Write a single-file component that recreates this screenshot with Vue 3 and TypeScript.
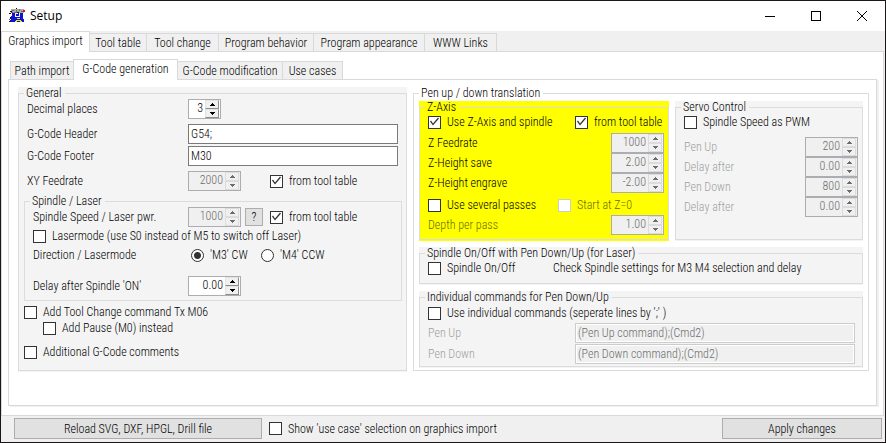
<script setup lang="ts">
import { h, reactive, ref } from 'vue'

interface SpinProps {
  id: string
  value: string
  disabled?: boolean
}

interface Field {
  id: string
  label: string
  value: string
}

interface Tab {
  label: string
  width: number
}

const arrow = (up: boolean) =>
  h('svg', { width: 5, height: 3, viewBox: '0 0 5 3', 'aria-hidden': 'true' }, [
    h('path', { d: up ? 'M2 0H3V1H4V2H5V3H0V2H1V1H2Z' : 'M0 0H5V1H4V2H3V3H2V2H1V1H0Z' }),
  ])

const SpinBox = (props: SpinProps) =>
  h('span', { class: ['spin', { off: props.disabled }] }, [
    h('input', { id: props.id, type: 'text', value: props.value, disabled: props.disabled }),
    h('span', { class: 'spin-buttons' }, [
      h('button', { type: 'button', disabled: props.disabled, 'aria-label': 'Up' }, [arrow(true)]),
      h('button', { type: 'button', disabled: props.disabled, 'aria-label': 'Down' }, [arrow(false)]),
    ]),
  ])
SpinBox.props = { id: String, value: String, disabled: Boolean }

const mainTabs: Tab[] = [
  { label: 'Graphics import', width: 89 },
  { label: 'Tool table', width: 57 },
  { label: 'Tool change', width: 72 },
  { label: 'Program behavior', width: 95 },
  { label: 'Program appearance', width: 111 },
  { label: 'WWW Links', width: 72 },
]
const subTabs: Tab[] = [
  { label: 'Path import', width: 64 },
  { label: 'G-Code generation', width: 105 },
  { label: 'G-Code modification', width: 105 },
  { label: 'Use cases', width: 60 },
]
const activeMain = ref(0)
const activeSub = ref(1)

const zFields: Field[] = [
  { id: 'z-feed', label: 'Z Feedrate', value: '1000' },
  { id: 'z-save', label: 'Z-Height save', value: '2.00' },
  { id: 'z-engrave', label: 'Z-Height engrave', value: '-2.00' },
]
const servoFields: Field[] = [
  { id: 'servo-up', label: 'Pen Up', value: '200' },
  { id: 'servo-up-delay', label: 'Delay after', value: '0.00' },
  { id: 'servo-down', label: 'Pen Down', value: '800' },
  { id: 'servo-down-delay', label: 'Delay after', value: '0.00' },
]

const form = reactive({
  header: 'G54;',
  footer: 'M30',
  feedFromTable: true,
  speedFromTable: true,
  laserMode: false,
  direction: 'M3',
  toolChange: false,
  pause: false,
  comments: false,
  useZ: true,
  zFromTable: true,
  passes: false,
  startZero: false,
  pwm: false,
  spindleOnOff: false,
  individual: false,
  penUp: '(Pen Up command);(Cmd2)',
  penDown: '(Pen Down command);(Cmd2)',
  showUseCase: false,
})
</script>

<template>
  <div class="window">
    <header class="titlebar">
      <svg class="app-icon" width="16" height="16" viewBox="0 0 16 16" shape-rendering="crispEdges" aria-hidden="true">
        <path fill="#a9a9a9" d="M2 1h13v4H2z" />
        <path fill="#6b6b6b" d="M3 2h2v1H3zM7 2h1v2H7zM10 1h1v2h-1zM12 3h2v1h-2zM5 4h3v1H5z" />
        <path fill="#111" d="M7 0h1v1H7zM1 3h2v1H1zM0 5h2v1H0zM1 9h1v2H1zM0 13h3v1H0zM13 6h1v2h-1zM8 4h2v1H8z" />
        <path fill="#e01414" d="M14 2h2v2h-2zM2 4h2v1H2zM0 11h1v1H0z" />
        <path fill="#0a14d2" d="M3 5h11v9H3zM2 8h1v6H2zM1 12h1v2H1zM14 11h1v3h-1z" />
        <path fill="#f2f2f2" d="M6 5h1v4H6zM7 5h2v1H7zM10 5h1v4h-1zM7 8h3v1H7z" />
        <path fill="#f5e61a" d="M8 10h3v1H8zM7 12h5v1H7zM6 13h2v1H6zM11 13h2v1h-2z" />
      </svg>
      <h1>Setup</h1>
      <div class="window-buttons">
        <button type="button" aria-label="Minimize">
          <svg width="12" height="12" viewBox="0 0 12 12" shape-rendering="crispEdges"><path d="M1 6.5H11" /></svg>
        </button>
        <button type="button" aria-label="Maximize">
          <svg width="12" height="12" viewBox="0 0 12 12" shape-rendering="crispEdges"><path d="M1.500 1.500H10.500V10.500H1.500Z" /></svg>
        </button>
        <button type="button" aria-label="Close">
          <svg width="12" height="12" viewBox="0 0 12 12"><path d="M1 1L11 11M11 1L1 11" /></svg>
        </button>
      </div>
    </header>

    <nav class="tabs main-tabs">
      <button
        v-for="(tab, i) in mainTabs"
        :key="tab.label"
        type="button"
        class="tab"
        :class="{ active: i === activeMain }"
        :style="{ width: tab.width + 'px' }"
        @click="activeMain = i"
      >{{ tab.label }}</button>
    </nav>

    <main class="page">
      <nav class="tabs sub-tabs">
        <button
          v-for="(tab, i) in subTabs"
          :key="tab.label"
          type="button"
          class="tab"
          :class="{ active: i === activeSub }"
          :style="{ width: tab.width + 'px' }"
          @click="activeSub = i"
        >{{ tab.label }}</button>
      </nav>

      <div class="subpage">
        <div class="box general">
          <fieldset>
            <legend>General</legend>
            <div class="row">
              <label class="name" for="decimals">Decimal places</label>
              <SpinBox id="decimals" class="small" value="3" />
            </div>
            <div class="row gap-m">
              <label class="name" for="header">G-Code Header</label>
              <input id="header" v-model="form.header" class="text" type="text" />
            </div>
            <div class="row gap-s">
              <label class="name" for="footer">G-Code Footer</label>
              <input id="footer" v-model="form.footer" class="text" type="text" />
            </div>
            <div class="row gap-m">
              <label class="name" for="feed">XY Feedrate</label>
              <SpinBox id="feed" value="2000" disabled />
              <label class="check table-check"><input v-model="form.feedFromTable" type="checkbox" />from tool table</label>
            </div>

            <div class="box spindle">
              <fieldset>
                <legend>Spindle / Laser</legend>
                <div class="row">
                  <label class="name" for="speed">Spindle Speed / Laser pwr.</label>
                  <SpinBox id="speed" value="1000" disabled />
                  <button type="button" class="push help">?</button>
                  <label class="check"><input v-model="form.speedFromTable" type="checkbox" />from tool table</label>
                </div>
                <label class="check line gap-xs"><input v-model="form.laserMode" type="checkbox" />Lasermode (use S0 instead of M5 to switch off Laser)</label>
                <div class="row line direction" role="radiogroup" aria-label="Direction / Lasermode">
                  <span class="name">Direction / Lasermode</span>
                  <label class="check cw"><input v-model="form.direction" type="radio" name="direction" value="M3" />'M3' CW</label>
                  <label class="check"><input v-model="form.direction" type="radio" name="direction" value="M4" />'M4' CCW</label>
                </div>
                <div class="row delay">
                  <label class="name" for="delay">Delay after Spindle 'ON'</label>
                  <SpinBox id="delay" value="0.00" />
                </div>
              </fieldset>
            </div>

            <div class="options">
              <label class="check line"><input v-model="form.toolChange" type="checkbox" />Add Tool Change command Tx M06</label>
              <label class="check line nested"><input v-model="form.pause" type="checkbox" />Add Pause (M0) instead</label>
              <label class="check line comments"><input v-model="form.comments" type="checkbox" />Additional G-Code comments</label>
            </div>
          </fieldset>
        </div>

        <div class="box plain">
          <fieldset class="pen">
            <legend>Pen up / down translation</legend>
            <div class="pair">
              <div class="box yellow">
                <fieldset>
                  <legend>Z-Axis</legend>
                  <div class="row line gap-xs">
                    <label class="check first"><input v-model="form.useZ" type="checkbox" />Use Z-Axis and spindle</label>
                    <label class="check"><input v-model="form.zFromTable" type="checkbox" />from tool table</label>
                  </div>
                  <div class="stack">
                    <div v-for="f in zFields" :key="f.id" class="row spread">
                      <label :for="f.id">{{ f.label }}</label>
                      <SpinBox :id="f.id" :value="f.value" disabled />
                    </div>
                  </div>
                  <div class="row line passes">
                    <label class="check second"><input v-model="form.passes" type="checkbox" />Use several passes</label>
                    <label class="check dim"><input v-model="form.startZero" type="checkbox" disabled />Start at Z=0</label>
                  </div>
                  <div class="row spread gap-s">
                    <label class="dim" for="depth">Depth per pass</label>
                    <SpinBox id="depth" value="1.00" disabled />
                  </div>
                </fieldset>
              </div>

              <div class="box servo">
                <fieldset>
                  <legend>Servo Control</legend>
                  <label class="check line gap-xs"><input v-model="form.pwm" type="checkbox" />Spindle Speed as PWM</label>
                  <div class="stack">
                    <div v-for="f in servoFields" :key="f.id" class="row spread">
                      <label class="grey" :for="f.id">{{ f.label }}</label>
                      <SpinBox :id="f.id" :value="f.value" disabled />
                    </div>
                  </div>
                </fieldset>
              </div>
            </div>

            <div class="box laser">
              <fieldset>
                <legend>Spindle On/Off with Pen Down/Up (for Laser)</legend>
                <div class="row line gap-xs">
                  <label class="check on-off"><input v-model="form.spindleOnOff" type="checkbox" />Spindle On/Off</label>
                  <span>Check Spindle settings for M3 M4 selection and delay</span>
                </div>
              </fieldset>
            </div>

            <div class="box commands">
              <fieldset>
                <legend>Individual commands for Pen Down/Up</legend>
                <label class="check line gap-s"><input v-model="form.individual" type="checkbox" />Use individual commands (seperate lines by ';' )</label>
                <div class="row gap-s">
                  <label class="name grey" for="cmd-up">Pen Up</label>
                  <input id="cmd-up" v-model="form.penUp" class="text" type="text" disabled />
                </div>
                <div class="row gap-xs">
                  <label class="name grey" for="cmd-down">Pen Down</label>
                  <input id="cmd-down" v-model="form.penDown" class="text" type="text" disabled />
                </div>
              </fieldset>
            </div>
          </fieldset>
        </div>
      </div>
    </main>

    <footer class="actions">
      <button type="button" class="push reload">Reload SVG, DXF, HPGL, Drill file</button>
      <label class="check"><input v-model="form.showUseCase" type="checkbox" />Show 'use case' selection on graphics import</label>
      <button type="button" class="push apply">Apply changes</button>
    </footer>
  </div>
</template>

<style scoped>
.window {
  box-sizing: border-box;
  min-height: 100vh;
  display: flex;
  flex-direction: column;
  border: 1px solid #1b1719;
  background: #f0f0f0;
  color: #000;
  font: 300 12px/16px "Roboto Condensed", Roboto, "Liberation Sans", sans-serif;
}
.window button,
.window input {
  font: inherit;
  color: inherit;
  margin: 0;
  padding: 0;
  box-sizing: border-box;
}

/* title bar */
.titlebar {
  display: flex;
  align-items: center;
  height: 30px;
  padding-left: 8px;
  background: #fff;
}
.titlebar h1 {
  margin: 0 0 0 5px;
  font: 12px/16px "Open Sans", "Noto Sans", sans-serif;
}
.window-buttons {
  display: flex;
  margin-left: auto;
}
.window-buttons button {
  display: flex;
  align-items: center;
  justify-content: center;
  width: 46px;
  height: 30px;
  border: 0;
  background: none;
}
.window-buttons path {
  fill: none;
  stroke: #000;
}

/* tabs */
.tabs {
  display: flex;
  align-items: flex-end;
  height: 20px;
}
.sub-tabs {
  padding-left: 2px;
}
.tab {
  flex: none;
  height: 18px;
  border: 1px solid #d9d9d9;
  border-width: 1px 1px 0 0;
  background: #f0f0f0;
  white-space: nowrap;
}
.sub-tabs .tab:first-child {
  border-left-width: 1px;
}
.window .tab.active {
  position: relative;
  height: 21px;
  margin: 0 0 -1px -1px;
  padding-bottom: 2px;
  border-left-width: 1px;
  background: #fff;
}
.window .main-tabs .tab.active {
  margin-left: 0;
}
.page {
  flex: 1;
  display: flex;
  flex-direction: column;
  margin-right: 1px;
  padding: 7px 6px 9px;
  border: 1px solid #d9d9d9;
  background: #fff;
}
.subpage {
  flex: 1;
  display: grid;
  grid-template-columns: 389fr 456fr;
  align-content: start;
  gap: 6px;
  padding: 7px 7px 7px 9px;
  border: 1px solid #d9d9d9;
  box-shadow: 2px 1px 0 #f0f0f0;
}

/* group boxes */
.box {
  display: flex;
  min-width: 0;
  padding: 1px 0;
  background: #f4f4f4;
}
.plain {
  background: #fff;
}
.yellow {
  background: #ff0;
}
fieldset {
  flex: 1;
  min-width: 0;
  margin: 0;
  padding: 0 4px 4px 8px;
  border: 1px solid #dcdcdc;
}
legend {
  margin-left: -3px;
  padding: 0 3px 0 2px;
  line-height: 11px;
  white-space: nowrap;
}
.spindle {
  margin: 4px 0 0 -3px;
}
.options {
  margin: 2px 0 6px -3px;
}
.nested {
  margin-left: 19px;
}
.comments {
  margin-top: 8px;
}
.pen {
  padding: 2px 5px 1px;
}
.pen > legend {
  margin-left: 0;
}
.pair {
  display: grid;
  grid-template-columns: 250fr 188fr;
  gap: 6px;
}
.laser,
.commands {
  margin-top: 6px;
}
.laser fieldset {
  padding-bottom: 7px;
}
.commands fieldset {
  padding: 0 7px 2px 8px;
}

/* rows */
.row,
.check {
  display: flex;
  align-items: center;
  white-space: nowrap;
}
.row {
  min-height: 20px;
}
.line,
.row.line {
  min-height: 16px;
}
.spread {
  justify-content: space-between;
}
.gap-xs { margin-top: 1px; }
.gap-s { margin-top: 2px; }
.gap-m { margin-top: 5px; }
.direction { margin-top: 3px; }
.delay { margin-top: 13px; }
.passes { margin-top: 4px; }
.stack { margin-top: 3px; }
.servo .stack { margin-top: 7px; }

.name {
  flex: none;
  width: 161px;
}
.spindle .name {
  width: 155px;
}
.commands .name {
  width: 147px;
}
.table-check {
  margin-left: 29px;
}
.first {
  width: 147px;
}
.second {
  width: 130px;
}
.on-off {
  width: 125px;
}
.cw {
  width: 70px;
  margin-left: 3px;
}
.grey {
  color: #a0a0a0;
}
.dim {
  color: #6d6d00;
}

/* tick boxes and radios */
.check {
  gap: 6px;
}
.window .check input {
  flex: none;
  appearance: none;
  width: 13px;
  height: 13px;
  border: 1px solid #333;
  background: #fff;
}
.window .check input[type='checkbox']:checked::after {
  content: '';
  display: block;
  width: 11px;
  height: 11px;
  background: #333;
  clip-path: polygon(1px 5px, 2px 4px, 4px 7px, 9px 1px, 10px 2px, 4px 9px);
}
.window .check input:disabled {
  border-color: #ccc;
}
.window .check input[type='radio'] {
  border-radius: 50%;
}
.window .check input[type='radio']:checked {
  background: radial-gradient(circle, #333 3px, #fff 4px);
}

/* text and number fields */
.window .text {
  flex: 1;
  min-width: 0;
  height: 20px;
  padding: 0 2px;
  border: 1px solid #7a7a7a;
  background: #fff;
}
.general .text {
  margin-right: 4px;
}
.window .text:disabled {
  border-color: #ccc;
  background: #f0f0f0;
  box-shadow: inset 0 0 0 1px #fff;
  color: #6d6d6d;
}
.window :deep(.spin) {
  box-sizing: border-box;
  display: flex;
  flex: none;
  width: 53px;
  height: 20px;
  padding-right: 1px;
  border: 1px solid #abadb3;
  background: #fff;
}
.window :deep(.spin.small) {
  width: 33px;
}
.window :deep(.spin.off) {
  background: #f0f0f0;
  color: #6d6d6d;
}
.window :deep(.spin input) {
  box-sizing: border-box;
  flex: 1;
  width: 0;
  min-width: 0;
  margin: 0;
  padding: 0 2px 2px 0;
  border: 0;
  background: none;
  color: inherit;
  font: inherit;
  text-align: right;
}
.window :deep(.spin-buttons) {
  display: grid;
  grid-template-rows: 9px 9px;
  width: 14px;
}
.window :deep(.spin-buttons button) {
  box-sizing: border-box;
  display: flex;
  align-items: center;
  justify-content: center;
  margin: 0;
  padding: 0;
  border: 1px solid #e3e3e3;
  border-right-color: #8c8c8c;
  border-bottom-color: #8c8c8c;
  background: #f0f0f0;
}
.window :deep(.spin.off button) {
  border-color: #dcdcdc;
}
.window :deep(.spin svg) {
  display: block;
  flex: none;
  fill: #000;
}
.window :deep(.spin.off svg) {
  fill: #6d6d6d;
}

/* push buttons */
.push {
  border: 1px solid #adadad;
  background: #e1e1e1;
}
.help {
  width: 18px;
  height: 18px;
}
.window .help {
  margin: 0 7px 0 4px;
}
.actions {
  display: flex;
  align-items: center;
  padding: 2px 3px 3px 13px;
}
.actions .push {
  height: 21px;
}
.reload {
  width: 248px;
}
.actions .check {
  margin-left: 7px;
}
.apply {
  width: 160px;
}
.window .apply {
  margin-left: auto;
}
</style>

<style>
body {
  background: #f0f0f0;
}
</style>
